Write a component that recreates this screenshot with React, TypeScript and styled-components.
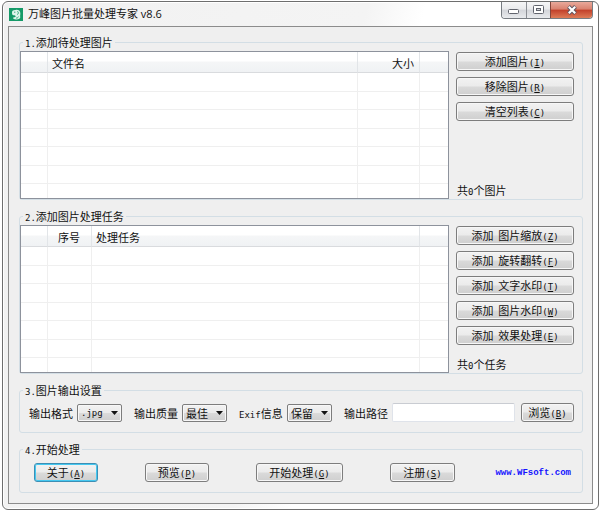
import React from "react";
import styled, { createGlobalStyle, css } from "styled-components";

const GlobalStyle = createGlobalStyle`
  * { box-sizing: border-box; }
  body {
    margin: 0;
    background: #ffffff;
    color: #111111;
    font-family: "Noto Sans CJK SC", "Noto Sans", sans-serif;
    font-size: 11px;
    line-height: 12px;
  }
  button, select, input { font: inherit; color: inherit; }
`;

const Window = styled.div`
  margin: 1px 1px 2px 2px;
  padding: 0 5px 5px;
  border: 1px solid #6e6e6e;
  border-radius: 6px;
  background: linear-gradient(105deg, #f1f1f1 0, #f4f4f4 50%, #ffffff 58%);
  box-shadow: inset 0 0 0 1px #ffffff;
`;

const TitleBar = styled.header`
  display: flex;
  align-items: flex-start;
  height: 24px;
`;

const Title = styled.h1`
  display: flex;
  align-items: center;
  gap: 4px;
  flex: 1;
  height: 24px;
  margin: 0;
  padding-left: 1px;
  font-family: "Open Sans", "Noto Sans CJK SC", sans-serif;
  font-size: 11px;
  font-weight: 400;
`;

const Controls = styled.div`
  display: flex;
  border: 1px solid #777c82;
  border-top: 0;
  border-radius: 0 0 4px 4px;
  overflow: hidden;
`;

const ControlButton = styled.button<{ $close?: boolean }>`
  display: flex;
  align-items: center;
  justify-content: center;
  width: ${(p) => (p.$close ? 42 : 24)}px;
  height: 16px;
  padding: 0;
  border: 0;
  border-left: 1px solid #8b8e94;
  background: linear-gradient(#f6f6f7 0%, #e9eaec 45%, #d3d5da 50%, #e8eaed 100%);
  &:first-child { border-left: 0; }
  ${(p) =>
    p.$close &&
    css`
      border-left-color: #85463c;
      background: linear-gradient(#e9a99b 0%, #d9826f 45%, #c2402a 50%, #de7c57 100%);
    `}
`;

const Client = styled.main`
  display: flex;
  flex-direction: column;
  gap: 10px;
  padding: 9px 9px 10px 10px;
  border: 1px solid #8c8c8c;
  background: #efefef;
`;

const Group = styled.fieldset`
  min-width: 0;
  margin: 0;
  padding: 0;
  border: 1px solid #d3dee5;
  border-radius: 3px;
`;

const Legend = styled.legend`
  height: 12px;
  margin-left: 3px;
  padding: 0 2px;
`;

const Latin = styled.span`
  font-family: "DejaVu Sans Mono", monospace;
  font-size: 9px;
  line-height: 0;
  white-space: pre;
`;

const ListBody = styled.div`
  display: flex;
  gap: 7px;
  padding: 3px 8px 0 0;
`;

const ListView = styled.div`
  flex: 1;
  min-width: 0;
  height: 148px;
  overflow: hidden;
  border: 1px solid #8d929c;
  background: #ffffff;
`;

const Table = styled.table`
  width: 100%;
  table-layout: fixed;
  border-collapse: separate;
  border-spacing: 0;
`;

const Column = styled.col<{ $width?: number }>`
  width: ${(p) => (p.$width ? `${p.$width}px` : "auto")};
`;

const HeadCell = styled.th<{ $align?: string }>`
  height: 21px;
  padding: 2px 5px 0 4px;
  border-right: 1px solid #e2e5e8;
  border-bottom: 1px solid #d9dbde;
  background: linear-gradient(#ffffff 45%, #f5f6f7 50%, #f0f2f4);
  font-weight: 400;
  text-align: ${(p) => p.$align ?? "left"};
  white-space: nowrap;
  &:last-child { border-right: 0; }
`;

const Row = styled.tr`
  height: 19px;
  &:nth-child(even) { height: 18px; }
`;

const Cell = styled.td`
  padding: 0;
  border-right: 1px solid #efefef;
  border-bottom: 1px solid #efefef;
  &:last-child { border-right: 0; }
`;

const Side = styled.div`
  display: flex;
  flex-direction: column;
  gap: 6px;
  width: 118px;
  padding: 1px 0 3px;
`;

const Count = styled.p`
  margin: auto 0 0 1px;
`;

const Button = styled.button<{ $width?: number; $focused?: boolean }>`
  flex: none;
  display: flex;
  align-items: center;
  justify-content: center;
  width: ${(p) => (p.$width ? `${p.$width}px` : "100%")};
  height: 19px;
  padding: 0;
  border: 1px solid ${(p) => (p.$focused ? "#3c8fb5" : "#7d7d7d")};
  border-radius: 3px;
  background: linear-gradient(#f2f2f2 0%, #ebebeb 48%, #dadada 52%, #cfcfcf 100%);
  box-shadow: inset 0 0 0 1px ${(p) => (p.$focused ? "#45c8f0" : "#f7f7f7")};
  white-space: pre;
`;

const ButtonText = styled.span`
  line-height: 15px;
`;

const SettingsBody = styled.div`
  display: flex;
  align-items: center;
  gap: 12px;
  padding: 7px 8px 10px 9px;
`;

const Field = styled.div<{ $grow?: boolean }>`
  display: flex;
  align-items: center;
  flex: ${(p) => (p.$grow ? "1" : "none")};
  min-width: 0;
`;

const Label = styled.label`
  flex: none;
  width: 48px;
  white-space: nowrap;
`;

const SelectBox = styled.span`
  display: grid;
  align-items: center;
  width: 45px;
  & > * { grid-area: 1 / 1; }
  & > svg { justify-self: end; margin-right: 4px; pointer-events: none; }
`;

const Select = styled.select<{ $latin?: boolean }>`
  appearance: none;
  width: 100%;
  height: 18px;
  padding: 0 0 0 3px;
  border: 1px solid #7d7d7d;
  border-radius: 2px;
  background: linear-gradient(#f2f2f2 0%, #ebebeb 48%, #dadada 52%, #cfcfcf 100%);
  box-shadow: inset 0 0 0 1px #f7f7f7;
  ${(p) =>
    p.$latin &&
    css`
      font-family: "DejaVu Sans Mono", monospace;
      font-size: 9px;
    `}
`;

const PathInput = styled.input`
  flex: 1;
  min-width: 0;
  height: 19px;
  margin-right: 6px;
  padding: 0 3px;
  border: 1px solid #dfe3ea;
  border-top-color: #c9ccd2;
  border-radius: 2px;
  background: #ffffff;
`;

const ActionsBody = styled.div`
  display: flex;
  align-items: center;
  justify-content: space-between;
  padding: 8px 11px 10px 14px;
`;

const Actions = styled.div`
  display: flex;
  gap: 47px;
`;

const SiteLink = styled.a`
  color: #1414ff;
  font-family: "Liberation Mono", monospace;
  font-size: 9px;
  font-weight: 700;
  text-decoration: none;
`;

function AppIcon() {
  return (
    <svg width="15" height="15" viewBox="0 0 15 15" aria-hidden="true">
      <rect x="0" y="1" width="14" height="13" fill="#159a68" />
      <path
        d="M3 5.4C3 3.6 4.8 2.8 6.6 3C8.8 2.4 11.2 3.6 11.3 6C11.5 8 10.8 8.8 11.3 10C11.4 11.8 9.4 12.6 7 12.4C4.8 12.4 3.8 11.6 4 10.8C4.6 10 6.4 10.3 6.7 9.4C6.8 8.5 5.6 8.2 4.4 8.2C3.2 7.8 3 6.8 3 5.4Z"
        fill="#dff5eb"
      />
      <path d="M5 5.2H6.4M8.4 4.2C9.8 5.2 9.6 7 8.2 7.6M7 11.1C8.4 11.1 9.2 10.6 9.4 9.6" fill="none" stroke="#159a68" strokeWidth="0.8" />
    </svg>
  );
}

function Arrow() {
  return (
    <svg width="7" height="4" viewBox="0 0 7 4" aria-hidden="true">
      <path d="M0 0H7L3.5 4Z" fill="#111" />
    </svg>
  );
}

interface CommandProps {
  text: string;
  accel: string;
  width?: number;
  focused?: boolean;
}

function Command({ text, accel, width, focused }: CommandProps) {
  return (
    <Button type="button" $width={width} $focused={focused}>
      <ButtonText>
        {text}
        <Latin>
          (<u>{accel}</u>)
        </Latin>
      </ButtonText>
    </Button>
  );
}

interface ListColumn {
  title: string;
  width?: number;
  align?: string;
}

function List({ columns, label }: { columns: ListColumn[]; label: string }) {
  return (
    <ListView>
      <Table aria-label={label}>
        <colgroup>
          {columns.map((c, i) => (
            <Column key={i} $width={c.width} />
          ))}
        </colgroup>
        <thead>
          <tr>
            {columns.map((c, i) => (
              <HeadCell key={i} $align={c.align}>{c.title}</HeadCell>
            ))}
          </tr>
        </thead>
        <tbody>
          {Array.from({ length: 7 }, (_, r) => (
            <Row key={r}>
              {columns.map((_, i) => (
                <Cell key={i} />
              ))}
            </Row>
          ))}
        </tbody>
      </Table>
    </ListView>
  );
}

interface ChoiceProps {
  id: string;
  label: React.ReactNode;
  value: string;
  latin?: boolean;
}

function Choice({ id, label, value, latin }: ChoiceProps) {
  return (
    <Field>
      <Label htmlFor={id}>{label}</Label>
      <SelectBox>
        <Select id={id} $latin={latin}>
          <option>{value}</option>
        </Select>
        <Arrow />
      </SelectBox>
    </Field>
  );
}

const fileColumns: ListColumn[] = [
  { title: "", width: 27 },
  { title: "文件名" },
  { title: "大小", width: 62, align: "right" },
  { title: "", width: 28 },
];

const taskColumns: ListColumn[] = [
  { title: "", width: 27 },
  { title: "序号", width: 44, align: "center" },
  { title: "处理任务" },
  { title: "", width: 28 },
];

const fileCommands = [
  { text: "添加图片", accel: "I" },
  { text: "移除图片", accel: "R" },
  { text: "清空列表", accel: "C" },
];

const taskCommands = [
  { name: "图片缩放", accel: "Z" },
  { name: "旋转翻转", accel: "F" },
  { name: "文字水印", accel: "T" },
  { name: "图片水印", accel: "W" },
  { name: "效果处理", accel: "E" },
];

export default function App() {
  return (
    <>
      <GlobalStyle />
      <Window>
        <TitleBar>
          <Title>
            <AppIcon />
            万峰图片批量处理专家 v8.6
          </Title>
          <Controls>
            <ControlButton type="button" aria-label="最小化">
              <svg width="12" height="10" viewBox="0 0 12 10">
                <rect x="0.5" y="4.5" width="10" height="4" rx="1" fill="#fff" stroke="#62656e" />
              </svg>
            </ControlButton>
            <ControlButton type="button" aria-label="最大化">
              <svg width="11" height="10" viewBox="0 0 11 10">
                <rect x="0.5" y="0.5" width="10" height="8" rx="1" fill="#fff" stroke="#62656e" />
                <rect x="3.5" y="3.5" width="4" height="2" fill="#d5d7dc" stroke="#62656e" />
              </svg>
            </ControlButton>
            <ControlButton type="button" aria-label="关闭" $close>
              <svg width="12" height="10" viewBox="0 0 12 10">
                <path d="M2.5 1.5L9.5 8.5M9.5 1.5L2.5 8.5" stroke="#5d5560" strokeWidth="4" />
                <path d="M2.8 1.8L9.2 8.2M9.2 1.8L2.8 8.2" stroke="#fff" strokeWidth="2.2" />
              </svg>
            </ControlButton>
          </Controls>
        </TitleBar>
        <Client>
          <Group>
            <Legend><Latin>1.</Latin>添加待处理图片</Legend>
            <ListBody>
              <List columns={fileColumns} label="待处理图片" />
              <Side>
                {fileCommands.map((c) => (
                  <Command key={c.accel} text={c.text} accel={c.accel} />
                ))}
                <Count>共<Latin>0</Latin>个图片</Count>
              </Side>
            </ListBody>
          </Group>
          <Group>
            <Legend><Latin>2.</Latin>添加图片处理任务</Legend>
            <ListBody>
              <List columns={taskColumns} label="图片处理任务" />
              <Side>
                {taskCommands.map((c) => (
                  <Command key={c.accel} text={`添加  ${c.name}`} accel={c.accel} />
                ))}
                <Count>共<Latin>0</Latin>个任务</Count>
              </Side>
            </ListBody>
          </Group>
          <Group>
            <Legend><Latin>3.</Latin>图片输出设置</Legend>
            <SettingsBody>
              <Choice id="format" label="输出格式" value=".jpg" latin />
              <Choice id="quality" label="输出质量" value="最佳" />
              <Choice id="exif" label={<><Latin>Exif</Latin>信息</>} value="保留" />
              <Field $grow>
                <Label htmlFor="path">输出路径</Label>
                <PathInput id="path" type="text" />
                <Command text="浏览" accel="B" width={53} />
              </Field>
            </SettingsBody>
          </Group>
          <Group>
            <Legend><Latin>4.</Latin>开始处理</Legend>
            <ActionsBody>
              <Actions>
                <Command text="关于" accel="A" width={64} focused />
                <Command text="预览" accel="P" width={64} />
                <Command text="开始处理" accel="G" width={87} />
                <Command text="注册" accel="S" width={65} />
              </Actions>
              <SiteLink href="#">www.WFsoft.com</SiteLink>
            </ActionsBody>
          </Group>
        </Client>
      </Window>
    </>
  );
}
